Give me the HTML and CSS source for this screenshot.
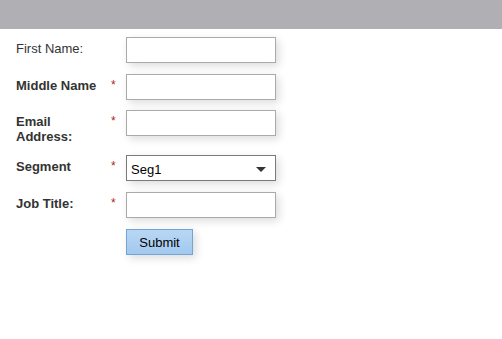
FILE: index.html
```html
<!DOCTYPE html>
<html lang="en">
<head>
  <meta charset="UTF-8">
  <title>Contact Form</title>
  <link rel="stylesheet" href="styles.css">
</head>
<body>
  <div class="topbar"></div>

  <!-- Formulario -->
  <form class="form">
    <div class="row">
      <label class="label plain" for="firstName">First Name:</label>
      <span class="req"></span>
      <input type="text" id="firstName" class="field">
    </div>
    <div class="row">
      <label class="label" for="middleName">Middle Name</label>
      <span class="req">*</span>
      <input type="text" id="middleName" class="field">
    </div>
    <div class="row">
      <label class="label" for="email">Email Address:</label>
      <span class="req">*</span>
      <input type="text" id="email" class="field">
    </div>
    <div class="row">
      <label class="label" for="segment">Segment</label>
      <span class="req">*</span>
      <div class="select" id="segment">
        <span>Seg1</span>
        <span class="arrow"></span>
      </div>
    </div>
    <div class="row">
      <label class="label" for="jobTitle">Job Title:</label>
      <span class="req">*</span>
      <input type="text" id="jobTitle" class="field">
    </div>
    <div class="row">
      <span class="label"></span>
      <span class="req"></span>
      <button type="button" class="btn">Submit</button>
    </div>
  </form>
</body>
</html>
```

FILE: styles.css
```css
* {
  margin: 0;
  padding: 0;
  box-sizing: border-box;
}
body {
  font-family: "Liberation Sans", Arial, sans-serif;
  font-size: 13px;
  color: #333;
  background: #fff;
}
.topbar {
  height: 29px;
  background-color: #b0afb4;
}
.form {
  padding: 8px 0 0 16px;
}
.row {
  display: flex;
  align-items: flex-start;
  margin-bottom: 11px;
}
.row:nth-child(2) {
  margin-bottom: 10px;
}
.label {
  width: 95px;
  padding: 4px 8px 0 0;
  line-height: 15px;
  font-weight: bold;
}
.label.plain {
  font-weight: normal;
}
.req {
  width: 15px;
  padding-top: 4px;
  line-height: 15px;
  color: #b22222;
  font-size: 12px;
}
.field, .select {
  width: 150px;
  height: 26px;
  border: 1px solid #aaa;
  background: #fff;
  box-shadow: 3px 3px 8px rgba(0,0,0,0.14);
  font-family: inherit;
  font-size: 13px;
}
.select {
  display: flex;
  align-items: center;
  justify-content: space-between;
  padding: 2px 9px 0 4px;
  border-color: #7a7a7a;
  color: #000;
}
.arrow {
  width: 0;
  height: 0;
  border-left: 5px solid transparent;
  border-right: 5px solid transparent;
  border-top: 5px solid #333;
}
.btn {
  width: 67px;
  height: 26px;
  border: 1px solid #74a3d6;
  background: linear-gradient(#b8d7f4, #a3c9ef);
  box-shadow: 3px 3px 8px rgba(0,0,0,0.14);
  font-family: inherit;
  font-size: 13px;
  color: #000;
  cursor: pointer;
}
```
